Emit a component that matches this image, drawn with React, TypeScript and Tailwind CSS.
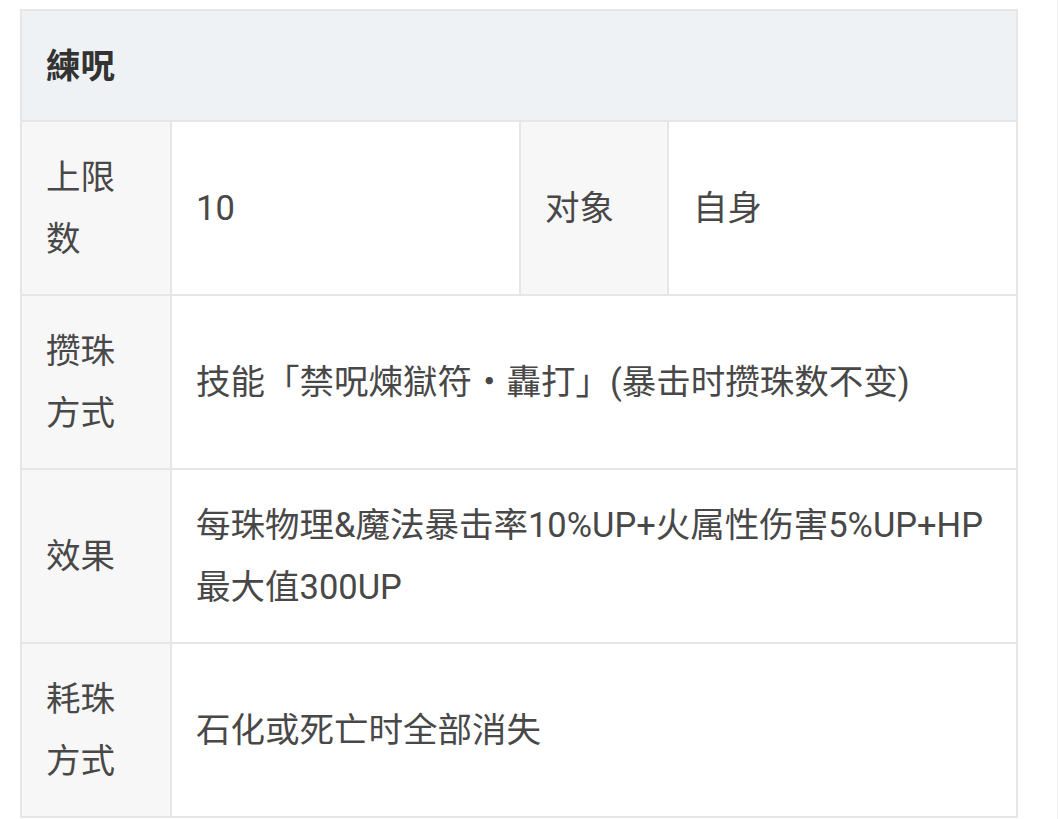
import React from "react";

const font = { fontFamily: "Roboto, 'Noto Sans CJK SC', 'Noto Sans CJK JP', sans-serif" };

function Label({ lines }: { lines: string[] }) {
  return (
    <div className="bg-[#f7f7f7] pl-[24px] pr-[6px] py-[24px] flex flex-col justify-center">
      {lines.map((l, i) => (
        <div key={i}>{l}</div>
      ))}
    </div>
  );
}

function Value({ children, span }: { children: React.ReactNode; span?: boolean }) {
  return (
    <div
      className={
        "bg-white pl-[24px] pr-[6px] py-[24px] flex items-center " +
        (span ? "col-span-3" : "")
      }
    >
      <div>{children}</div>
    </div>
  );
}

export default function App() {
  return (
    <div className="w-[1058px] h-[819px] bg-white relative overflow-hidden" style={font}>
      <div className="pt-[9px] pl-[20px]">
        <div className="w-[998px] bg-[#e6e6e6] p-[2px] grid grid-cols-[148px_347px_146px_347px] gap-[2px] text-[34.5px] leading-[62px] text-[#484848]">
          <div className="col-span-4 bg-[#eff2f5] pl-[24px] py-[23px] font-bold text-[#333] h-[109px] flex items-center">
            練呪
          </div>
          <Label lines={["上限", "数"]} />
          <Value>10</Value>
          <Label lines={["对象"]} />
          <Value>自身</Value>

          <Label lines={["攒珠", "方式"]} />
          <Value span>技能「禁呪煉獄符・轟打」(暴击时攒珠数不变)</Value>

          <Label lines={["效果"]} />
          <Value span>
            每珠物理&amp;魔法暴击率10%UP+火属性伤害5%UP+HP
            <br />
            最大值300UP
          </Value>

          <Label lines={["耗珠", "方式"]} />
          <Value span>石化或死亡时全部消失</Value>
        </div>
      </div>
      <div className="absolute top-0 right-0 w-px h-full bg-[#efefef]" />
    </div>
  );
}
